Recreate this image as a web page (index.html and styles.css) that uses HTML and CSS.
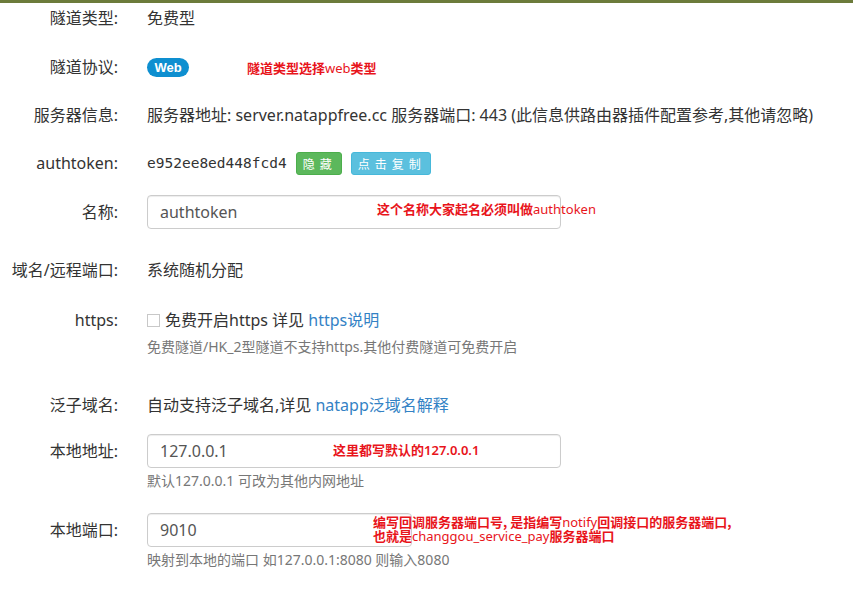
FILE: index.html
```
<!DOCTYPE html>
<html lang="zh-CN">
<head>
<meta charset="utf-8">
<title>隧道配置</title>
<link rel="stylesheet" href="styles.css">
</head>
<body>
<div class="topbar"></div>
<div class="form">
  <div class="row r1">
    <div class="lbl">隧道类型:</div>
    <div class="val">免费型</div>
  </div>
  <div class="row r2">
    <div class="lbl">隧道协议:</div>
    <div class="val"><span class="badge">Web</span></div>
    <div class="note note-web">隧道类型选择<span class="lt">web</span>类型</div>
  </div>
  <div class="row r3">
    <div class="lbl">服务器信息:</div>
    <div class="val">服务器地址: server.natappfree.cc 服务器端口: 443 (此信息供路由器插件配置参考,其他请忽略)</div>
  </div>
  <div class="row r4">
    <div class="lbl">authtoken:</div>
    <div class="val token-line">
      <span class="token">e952ee8ed448fcd4</span>
      <span class="btn btn-green">隐藏</span>
      <span class="btn btn-blue">点击复制</span>
    </div>
  </div>
  <div class="row r5">
    <div class="lbl">名称:</div>
    <div class="val"><div class="input input-wide">authtoken</div></div>
    <div class="note note-name">这个名称大家起名必须叫做<span class="lt">authtoken</span></div>
  </div>
  <div class="row r6">
    <div class="lbl">域名/远程端口:</div>
    <div class="val">系统随机分配</div>
  </div>
  <div class="row r7">
    <div class="lbl">https:</div>
    <div class="val">
      <div class="check-line"><span class="checkbox"></span>免费开启https 详见&nbsp;<a class="link">https说明</a></div>
      <div class="help">免费隧道/HK_2型隧道不支持https.其他付费隧道可免费开启</div>
    </div>
  </div>
  <div class="row r8">
    <div class="lbl">泛子域名:</div>
    <div class="val">自动支持泛子域名,详见 <a class="link">natapp泛域名解释</a></div>
  </div>
  <div class="row r9">
    <div class="lbl">本地地址:</div>
    <div class="val">
      <div class="input input-wide">127.0.0.1</div>
      <div class="help help-input">默认127.0.0.1 可改为其他内网地址</div>
    </div>
    <div class="note note-addr">这里都写默认的<span class="lt lt-bold">127.0.0.1</span></div>
  </div>
  <div class="row r10">
    <div class="lbl">本地端口:</div>
    <div class="val">
      <div class="input input-narrow">9010</div>
      <div class="help help-input">映射到本地的端口 如127.0.0.1:8080 则输入8080</div>
    </div>
    <div class="note note-port">
      <div class="note-line">编写回调服务器端口号, 是指编写<span class="lt">notify</span>回调接口的服务器端口,</div>
      <div class="note-line">也就是<span class="lt">changgou_service_pay</span>服务器端口</div>
    </div>
  </div>
</div>
</body>
</html>
```
FILE: styles.css
```
* { box-sizing: border-box; }
html, body { margin: 0; padding: 0; background: #fff; }
body {
  font-family: "Noto Sans", "Noto Sans CJK SC", sans-serif;
  font-size: 16px;
  color: #333;
  width: 853px;
  height: 593px;
  overflow: hidden;
}
.topbar { height: 3px; background: #6c7b3b; }
.form { display: flex; flex-direction: column; }
.row {
  position: relative;
  display: grid;
  grid-template-columns: 118px 1fr;
  column-gap: 29px;
  align-items: start;
}
.lbl { text-align: right; line-height: 34px; white-space: nowrap; }
.val { line-height: 34px; min-height: 34px; white-space: nowrap; }

.r1 { margin-top: -2px; }
.r2 { margin-top: 15px; }
.r3 { margin-top: 14px; }
.r4 { margin-top: 14px; }
.r5 { margin-top: 15px; }
.r6 { margin-top: 24px; }
.r7 { margin-top: 16px; }
.r8 { margin-top: 31px; }
.r9 { margin-top: 12px; }
.r10 { margin-top: 22px; }

.badge {
  display: inline-block;
  vertical-align: middle;
  width: 42px;
  height: 19px;
  line-height: 19px;
  border-radius: 10px;
  background: #0e8fd0;
  color: #fff;
  font-family: "Liberation Sans", Arial, sans-serif;
  font-weight: bold;
  font-size: 13px;
  text-align: center;
  position: relative;
  top: -1px;
}

.token-line { display: flex; align-items: center; }
.token {
  font-family: "DejaVu Sans Mono", monospace;
  font-size: 14.5px;
  margin-right: 9px;
}
.btn {
  display: inline-block;
  height: 23px;
  font-size: 12px;
  color: #fff;
  letter-spacing: 5px;
  padding: 0 4px 0 6px;
  border-radius: 3px;
  line-height: 21px;
  font-family: "Noto Sans CJK SC", sans-serif;
}
.btn-green { background: #5cb85c; border: 1px solid #4cae4c; width: 46px; margin-right: 9px; }
.btn-blue { background: #5bc0de; border: 1px solid #46b8da; width: 80px; }

.input {
  height: 34px;
  border: 1px solid #ccc;
  border-radius: 4px;
  padding: 0 12px;
  line-height: 32px;
  color: #555;
  box-shadow: inset 0 1px 1px rgba(0,0,0,.075);
  background: #fff;
}
.input-wide { width: 414px; }
.input-narrow { width: 265px; }

.check-line { display: flex; align-items: center; line-height: 34px; }
.checkbox {
  display: inline-block;
  width: 13px;
  height: 13px;
  border: 1px solid #c8c8c8;
  background: #fff;
  margin-right: 5px;
}
.link { color: #3382c5; text-decoration: none; }
.help { font-size: 14px; color: #777; line-height: 20px; }
.help-input { margin-top: 3px; }

.note {
  position: absolute;
  color: #e8141b;
  font-family: "Noto Sans CJK SC", sans-serif;
  font-weight: bold;
  font-size: 13px;
  line-height: 14px;
  white-space: nowrap;
}
.note .lt { font-family: "Noto Sans", sans-serif; font-weight: normal; }
.note .lt-bold { font-weight: 600; }
.note-line { height: 14px; }
.note-web { left: 247px; top: 11px; }
.note-name { left: 377px; top: 7px; }
.note-addr { left: 333px; top: 9px; }
.note-port { left: 373px; top: 2px; }
```
